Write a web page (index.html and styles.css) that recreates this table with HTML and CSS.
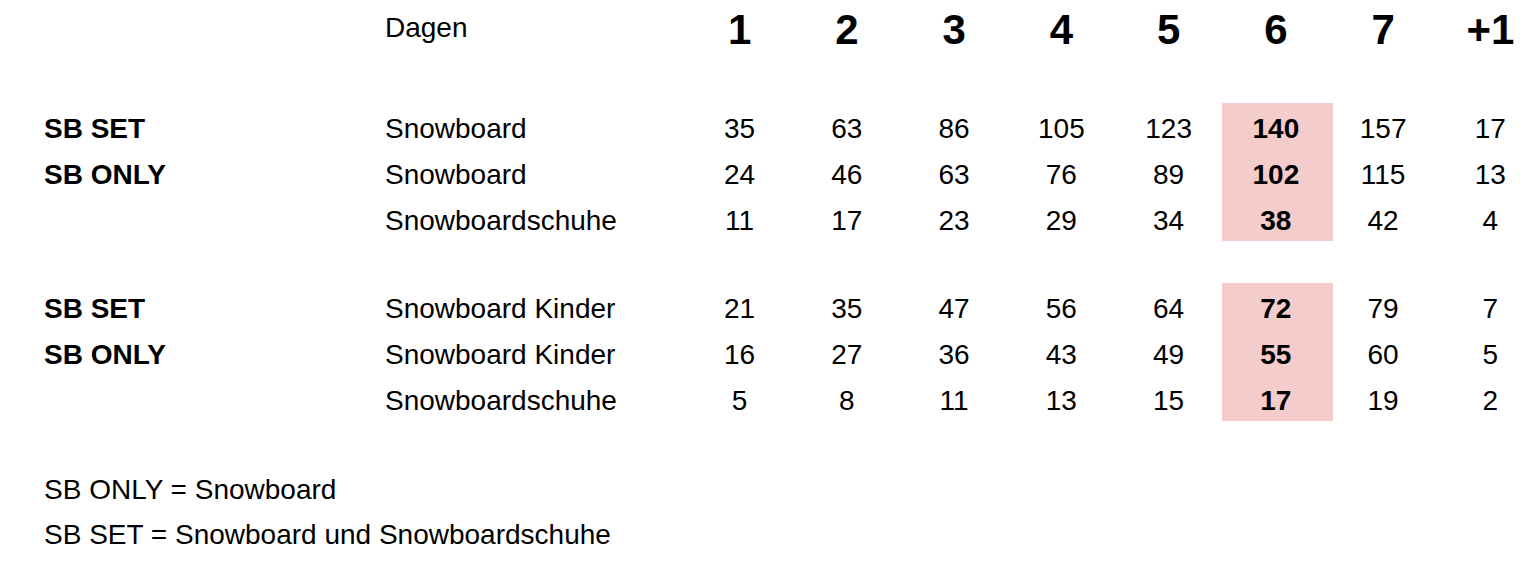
FILE: index.html
```html
<!DOCTYPE html>
<html lang="de">
<head>
<meta charset="utf-8">
<title>Snowboard Preise</title>
<link rel="stylesheet" href="styles.css">
</head>
<body>
<main class="sheet">
  <table class="prices">
    <colgroup>
      <col class="c-type">
      <col class="c-item">
      <col class="c-day"><col class="c-day"><col class="c-day"><col class="c-day">
      <col class="c-day"><col class="c-day"><col class="c-day"><col class="c-day">
    </colgroup>
    <thead>
      <tr class="head">
        <th></th>
        <th class="item dagen">Dagen</th>
        <th class="day">1</th><th class="day">2</th><th class="day">3</th><th class="day">4</th>
        <th class="day">5</th><th class="day">6</th><th class="day">7</th><th class="day">+1</th>
      </tr>
    </thead>
    <tbody>
      <tr class="spacer first"><td colspan="10"></td></tr>
      <tr class="row">
        <td class="type">SB SET</td><td class="item">Snowboard</td>
        <td class="num">35</td><td class="num">63</td><td class="num">86</td><td class="num">105</td>
        <td class="num">123</td><td class="num hl">140</td><td class="num">157</td><td class="num">17</td>
      </tr>
      <tr class="row">
        <td class="type">SB ONLY</td><td class="item">Snowboard</td>
        <td class="num">24</td><td class="num">46</td><td class="num">63</td><td class="num">76</td>
        <td class="num">89</td><td class="num hl">102</td><td class="num">115</td><td class="num">13</td>
      </tr>
      <tr class="row">
        <td class="type"></td><td class="item">Snowboardschuhe</td>
        <td class="num">11</td><td class="num">17</td><td class="num">23</td><td class="num">29</td>
        <td class="num">34</td><td class="num hl">38</td><td class="num">42</td><td class="num">4</td>
      </tr>
      <tr class="spacer"><td colspan="10"></td></tr>
      <tr class="row">
        <td class="type">SB SET</td><td class="item">Snowboard Kinder</td>
        <td class="num">21</td><td class="num">35</td><td class="num">47</td><td class="num">56</td>
        <td class="num">64</td><td class="num hl">72</td><td class="num">79</td><td class="num">7</td>
      </tr>
      <tr class="row">
        <td class="type">SB ONLY</td><td class="item">Snowboard Kinder</td>
        <td class="num">16</td><td class="num">27</td><td class="num">36</td><td class="num">43</td>
        <td class="num">49</td><td class="num hl">55</td><td class="num">60</td><td class="num">5</td>
      </tr>
      <tr class="row">
        <td class="type"></td><td class="item">Snowboardschuhe</td>
        <td class="num">5</td><td class="num">8</td><td class="num">11</td><td class="num">13</td>
        <td class="num">15</td><td class="num hl">17</td><td class="num">19</td><td class="num">2</td>
      </tr>
    </tbody>
  </table>
  <div class="notes">
    <p class="note">SB ONLY = Snowboard</p>
    <p class="note">SB SET = Snowboard und Snowboardschuhe</p>
  </div>
</main>
</body>
</html>
```

FILE: styles.css
```css
html, body {
  margin: 0;
  padding: 0;
  background: #ffffff;
  overflow: hidden;
}

body {
  font-family: "Liberation Sans", Arial, sans-serif;
  color: #000000;
  font-size: 28px;
}

.sheet {
  padding-left: 44px;
  width: 1500px;
}

.prices {
  border-collapse: collapse;
  border-spacing: 0;
  table-layout: fixed;
  width: 1500px;
}

.c-type { width: 341px; }
.c-item { width: 301px; }
.c-day { width: 107.25px; }

.prices th,
.prices td {
  padding: 0;
  margin: 0;
  white-space: nowrap;
  font-weight: normal;
}

.head {
  height: 57px;
}

.head th {
  vertical-align: top;
}

.head .day {
  font-size: 42px;
  font-weight: bold;
  text-align: center;
  line-height: 48px;
  padding-top: 6px;
}

.head .dagen {
  text-align: left;
  font-size: 28px;
  line-height: 32px;
  padding-top: 12px;
}

.spacer {
  height: 42px;
}

.spacer.first {
  height: 46px;
}

.row {
  height: 46px;
}

.row td {
  vertical-align: top;
  line-height: 32px;
  padding-top: 10px;
  height: 36px;
}

.type {
  font-weight: bold !important;
  text-align: left;
}

.item {
  text-align: left;
}

.num {
  text-align: center;
}

.num.hl {
  background: #f4cccc;
  font-weight: bold;
  box-shadow: 3px 0 0 #f4cccc;
}

.notes {
  padding-top: 44px;
}

.note {
  margin: 0;
  line-height: 32px;
  padding-top: 9px;
  box-sizing: border-box;
  height: 45px;
}
```
